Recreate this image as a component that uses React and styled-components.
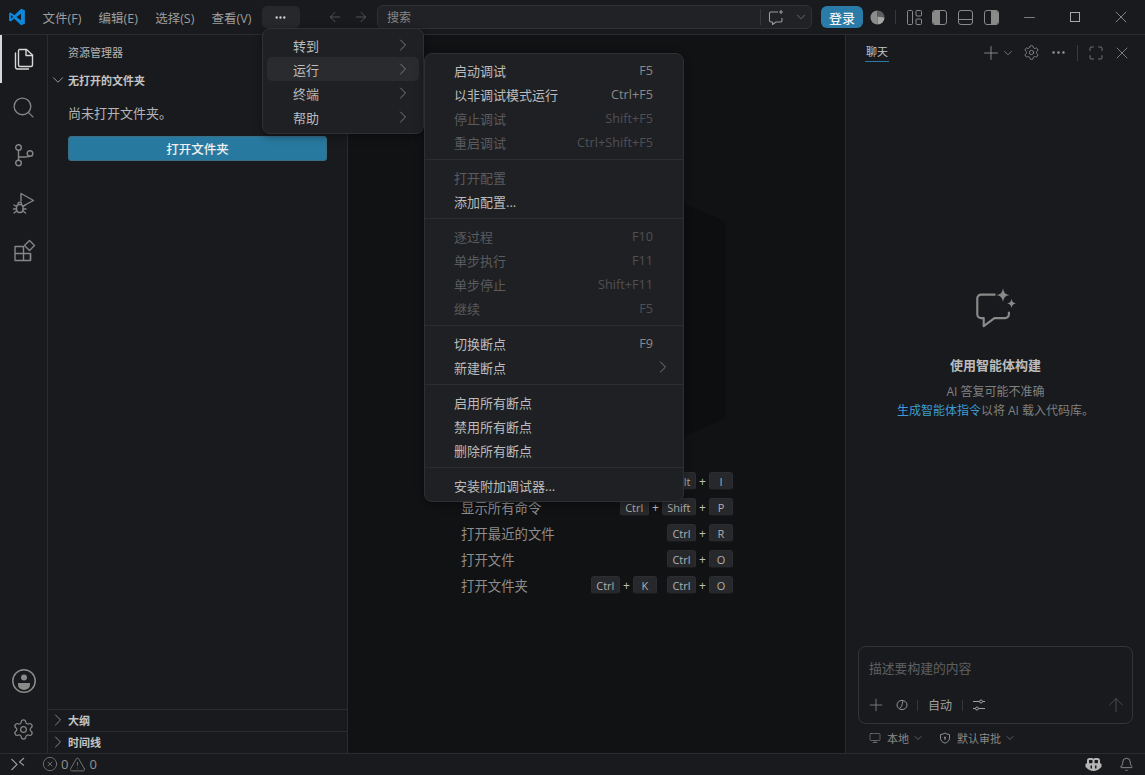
import React from 'react'
import styled, { createGlobalStyle } from 'styled-components'
import {
  ChevronDown,
  ChevronRight,
  ArrowLeft,
  ArrowRight,
  Search,
  Plus,
  Settings,
  Ellipsis,
  Maximize,
  X,
  Minus,
  ArrowUp,
  Monitor,
  Bell,
  CircleX,
  TriangleAlert,
} from 'lucide-react'

const GlobalStyle = createGlobalStyle`
  html, body { margin: 0; padding: 0; height: 100%; background: #181a1d; overflow: hidden; }
  #root { height: 100%; }
  * { box-sizing: border-box; }
`

const CJK = `"Open Sans", "Noto Sans CJK SC", sans-serif`

const runMenu = [
  [
    ['启动调试', 'F5'],
    ['以非调试模式运行', 'Ctrl+F5'],
    ['停止调试', 'Shift+F5', true],
    ['重启调试', 'Ctrl+Shift+F5', true],
  ],
  [
    ['打开配置', '', true],
    ['添加配置...', ''],
  ],
  [
    ['逐过程', 'F10', true],
    ['单步执行', 'F11', true],
    ['单步停止', 'Shift+F11', true],
    ['继续', 'F5', true],
  ],
  [
    ['切换断点', 'F9'],
    ['新建断点', '', false, true],
  ],
  [
    ['启用所有断点', ''],
    ['禁用所有断点', ''],
    ['删除所有断点', ''],
  ],
  [['安装附加调试器...', '']],
]

const shortcuts = [
  ['', [['Alt', 'I']]],
  ['显示所有命令', [['Ctrl', 'Shift', 'P']]],
  ['打开最近的文件', [['Ctrl', 'R']]],
  ['打开文件', [['Ctrl', 'O']]],
  ['打开文件夹', [['Ctrl', 'K'], ['Ctrl', 'O']]],
]

const VscodeLogo = ({ size = 18, color = '#0e88dc' }) => (
  <svg width={size} height={size} viewBox="0 0 24 24">
    <path fill={color} d="M17.5 1 8.4 9.6 3.6 6 1.5 7v10l2.1 1 4.8-3.6 9.1 8.6 5-2.1V3.1L17.5 1ZM4 14.6V9.4L6.7 12 4 14.6Zm13.3 1.6L11.2 12l6.1-4.2v8.4Z" />
  </svg>
)

const FilesIcon = () => (
  <svg width="24" height="24" viewBox="0 0 24 24" fill="none" stroke="#d7d7d7" strokeWidth="1.4" strokeLinejoin="round" strokeLinecap="round">
    <path d="M7 2.5h7.5L20.5 8v10a1.5 1.5 0 0 1-1.5 1.5H8A1.5 1.5 0 0 1 6.5 18V3.5" />
    <path d="M14 2.5V8.500h6.5" />
    <path d="M3.5 6v13.5A2 2 0 0 0 5.5 22H16.5" />
  </svg>
)

const BranchIcon = () => (
  <svg width="24" height="24" viewBox="0 0 24 24" fill="none" stroke="#868686" strokeWidth="1.4">
    <circle cx="6.5" cy="4.5" r="2.8" />
    <circle cx="6.5" cy="20" r="2.8" />
    <circle cx="18" cy="10.5" r="2.8" />
    <path d="M6.5 7.3v9.9M6.5 14H13c2.500 0 4.500-.6 5-.7" />
  </svg>
)

const RunDebugIcon = () => (
  <svg width="24" height="24" viewBox="0 0 24 24" fill="none" stroke="#868686" strokeWidth="1.4" strokeLinejoin="round" strokeLinecap="round">
    <path d="M9 10V2.5L21.5 9.5 12 14.5" />
    <rect x="4.5" y="13.5" width="6.5" height="8" rx="3" />
    <path d="M6 13c0-2.5 3.5-2.5 3.5 0M2 14l2.5 1.5M13.5 14 11 15.5M1.5 18h3M14 18h-3M2 22l2.5-2M13.5 22 11 20" />
  </svg>
)

const ExtensionsIcon = () => (
  <svg width="24" height="24" viewBox="0 0 24 24" fill="none" stroke="#868686" strokeWidth="1.4" strokeLinejoin="round">
    <path d="M3 7.5h8.5V21.5H3zM3 14.5h15.5V21.5H11.5" />
    <path d="M18.5 14.5V21.5" />
    <path d="m17.5 1.5 5 5-5 5-5-5z" />
  </svg>
)

const AccountIcon = () => (
  <svg width="26" height="26" viewBox="0 0 26 26" fill="none">
    <circle cx="13" cy="13" r="11.2" stroke="#8a8a8a" strokeWidth="1.5" />
    <circle cx="13" cy="9.5" r="3" fill="#8a8a8a" />
    <path fill="#8a8a8a" d="M7 15h12v2a6 5 0 0 1-12 0z" />
  </svg>
)

const ChatSparkle = () => (
  <svg width="45" height="43" viewBox="0 0 42 40" fill="none">
    <path stroke="#8a8a8a" strokeWidth="2" strokeLinejoin="round" d="M21 7H7.5A3.5 3.5 0 0 0 4 10.5v15A3.5 3.5 0 0 0 7.5 29H10v7.5L20 29h10a3.5 3.5 0 0 0 3.5-3.5V23" />
    <path fill="#8a8a8a" d="M28 1c1 4.5 2 5.5 6 6.5-4 1-5 2-6 6.5-1-4.5-2-5.5-6-6.5 4-1 5-2 6-6.5ZM36 11c.7 3 1.3 3.6 4 4.3-2.7.7-3.3 1.3-4 4.3-.7-3-1.3-3.6-4-4.3 2.7-.7 3.3-1.3 4-4.3Z" />
  </svg>
)

const App = () => (
  <>
    <GlobalStyle />
    <Window>
      <TitleBar>
        <LogoSlot>
          <VscodeLogo />
        </LogoSlot>
        <MenuBar>
          <MenuItem>文件(F)</MenuItem>
          <MenuItem>编辑(E)</MenuItem>
          <MenuItem>选择(S)</MenuItem>
          <MenuItem>查看(V)</MenuItem>
          <MoreButton>
            <Ellipsis size={13} strokeWidth={2.4} />
          </MoreButton>
        </MenuBar>
        <NavArrows>
          <ArrowLeft size={16} strokeWidth={1.2} />
          <ArrowRight size={16} strokeWidth={1.2} />
        </NavArrows>
        <SearchBox>
          <span>搜索</span>
          <SearchRight>
            <SearchDivider />
            <svg width="17" height="17" viewBox="0 0 17 17" fill="none" stroke="#9a9a9a" strokeWidth="1.1" strokeLinejoin="round">
              <path d="M10 3H3A1.5 1.5 0 0 0 1.5 4.5v7A1.5 1.5 0 0 0 3 13h1.5v2.5L8 13h4.5A1.5 1.5 0 0 0 14 11.5V9" />
              <path d="M13 1v4M11 3h4" />
            </svg>
            <SearchChevron size={14} color="#8a8a8a" strokeWidth={1.2} />
          </SearchRight>
        </SearchBox>
        <LoginButton>登录</LoginButton>
        <TitleIcons>
          <svg width="15" height="15" viewBox="0 0 16 16">
            <path fill="#8c8c8c" d="M8 .5a7.5 7.5 0 0 0 0 15z" />
            <path fill="#5e5e5e" d="M8 .5a7.5 7.5 0 0 1 7.5 7.5L8 7z" />
            <path fill="#a6a6a6" d="M8 7l7.5 1A7.5 7.5 0 0 1 8 15.5z" />
          </svg>
          <TitleDivider />
          <LayoutIcon viewBox="0 0 15 15" fill="none" stroke="#8a8a8a">
            <rect x=".5" y=".5" width="5" height="14" rx="1" />
            <rect x="9" y=".5" width="5.5" height="5.5" rx="1" />
            <rect x="9" y="9" width="5.5" height="5.5" rx="1" />
          </LayoutIcon>
          <PanelIcon kind="left" />
          <PanelIcon kind="bottom" />
          <PanelIcon kind="right" />
        </TitleIcons>
        <WindowControls>
          <WindowButton><Minus size={17} strokeWidth={1} /></WindowButton>
          <WindowButton>
            <svg width="10" height="10" viewBox="0 0 10 10" fill="none" stroke="#a8a8a8">
              <rect x=".5" y=".5" width="9" height="9" />
            </svg>
          </WindowButton>
          <WindowButton><X size={20} strokeWidth={0.9} /></WindowButton>
        </WindowControls>
      </TitleBar>

      <Body>
        <ActivityBar>
          <ActivityGroup>
            <ActivityItem $active><FilesIcon /></ActivityItem>
            <ActivityItem><Search size={25} strokeWidth={1.3} /></ActivityItem>
            <ActivityItem><BranchIcon /></ActivityItem>
            <ActivityItem><RunDebugIcon /></ActivityItem>
            <ActivityItem><ExtensionsIcon /></ActivityItem>
          </ActivityGroup>
          <ActivityGroup>
            <ActivityItem><AccountIcon /></ActivityItem>
            <ActivityItem><Settings size={23} strokeWidth={1.3} /></ActivityItem>
          </ActivityGroup>
        </ActivityBar>

        <SideBar>
          <SideTitle>资源管理器</SideTitle>
          <SectionHeader>
            <ChevronDown size={18} strokeWidth={1} />
            无打开的文件夹
          </SectionHeader>
          <SectionBody>
            <EmptyNote>尚未打开文件夹。</EmptyNote>
            <OpenButton>打开文件夹</OpenButton>
          </SectionBody>
          <SideFooter>
            <FooterRow>
              <ChevronRight size={20} strokeWidth={1} />
              大纲
            </FooterRow>
            <FooterRow>
              <ChevronRight size={20} strokeWidth={1} />
              时间线
            </FooterRow>
          </SideFooter>
        </SideBar>

        <Editor>
          <Watermark>
            <VscodeLogo size={266} color="#0d0e10" />
          </Watermark>
          <ShortcutList>
            {shortcuts.map(([label, chords]) => (
              <ShortcutRow key={label}>
                <span>{label}</span>
                <Chords>
                  {chords.map((keys, c) => (
                    <Chord key={c}>
                      {keys.map((k, i) => (
                        <React.Fragment key={k}>
                          {i > 0 && <Joiner>+</Joiner>}
                          <KeyCap>{k}</KeyCap>
                        </React.Fragment>
                      ))}
                    </Chord>
                  ))}
                </Chords>
              </ShortcutRow>
            ))}
          </ShortcutList>
        </Editor>

        <ChatPanel>
          <ChatHeader>
            <ChatTab>聊天</ChatTab>
            <ChatActions>
              <Plus size={22} strokeWidth={0.9} />
              <TightChevron size={14} strokeWidth={1.2} />
              <NudgedGear size={17} strokeWidth={1.1} />
              <Ellipsis size={17} strokeWidth={1.6} />
              <ChatDivider />
              <Maximize size={16} strokeWidth={1.1} />
              <NudgedClose size={20} strokeWidth={0.9} />
            </ChatActions>
          </ChatHeader>
          <ChatEmpty>
            <ChatSparkle />
            <ChatHeading>使用智能体构建</ChatHeading>
            <ChatHint>AI 答复可能不准确</ChatHint>
            <ChatHint><ChatLink>生成智能体指令</ChatLink>以将 AI 载入代码库。</ChatHint>
          </ChatEmpty>
          <InputCard>
            <Placeholder>描述要构建的内容</Placeholder>
            <InputTools>
              <Plus size={20} strokeWidth={0.9} />
              <ToolGlyph>
                <svg width="14" height="14" viewBox="0 0 14 14" fill="none" stroke="#929292">
                  <ellipse cx="7" cy="7" rx="5" ry="4.6" />
                  <path d="M7.8 3.2C7.5 6 6.5 9 4.8 10.6" />
                </svg>
              </ToolGlyph>
              <ToolDivider $left={8} />
              <ToolLabel>自动</ToolLabel>
              <ToolDivider $left={10} />
              <ToolSliders>
                <svg width="14" height="14" viewBox="0 0 14 14" fill="none" stroke="#a0a0a0">
                  <path d="M1 3.5h6.5M10.5 3.5H13M1 10.5h2.5M6.5 10.5H13" />
                  <circle cx="9" cy="3.5" r="1.5" />
                  <circle cx="5" cy="10.5" r="1.5" />
                </svg>
              </ToolSliders>
              <SendIcon><ArrowUp size={22} strokeWidth={0.9} /></SendIcon>
            </InputTools>
          </InputCard>
          <ChatOptions>
            <ChatOption>
              <Monitor size={12} strokeWidth={1.2} />
              本地
              <OptionChevron size={12} strokeWidth={1.2} />
            </ChatOption>
            <ChatOption>
              <svg width="12" height="12" viewBox="0 0 12 12" fill="none" stroke="#8a8a8a">
                <path d="M6 1c1.2.9 2.7 1.4 4.5 1.5v3.5c0 2.7-1.800 4.300-4.500 5.200C3.300 10.300 1.500 8.700 1.500 6V2.500C3.300 2.400 4.800 1.900 6 1Z" />
                <circle cx="6" cy="5.5" r="1" fill="#8a8a8a" stroke="none" />
                <path d="M6 6v2" />
              </svg>
              默认审批
              <OptionChevron size={12} strokeWidth={1.2} />
            </ChatOption>
          </ChatOptions>
        </ChatPanel>
      </Body>

      <StatusBar>
        <StatusLeft>
          <RemoteSlot>
            <svg width="16" height="16" viewBox="0 0 16 16" fill="none" stroke="#9a9a9a" strokeWidth="1.1">
              <path d="M1.5 3 7 8.5 1.5 14M14 2 9.5 6l4.5 3.5" />
            </svg>
          </RemoteSlot>
          <StatusItem><CircleX size={16} strokeWidth={1} />0</StatusItem>
          <StatusItem><TriangleAlert size={17} strokeWidth={1} />0</StatusItem>
        </StatusLeft>
        <StatusRight>
          <svg width="17" height="15" viewBox="0 0 17 15">
            <path fill="#b5b5b5" fillRule="evenodd" d="M4.5 1h2.3c.8 0 1.4.3 1.7 1 .3-.7.9-1 1.700-1h2.300C14.200 1 15 2 15 3.500V6l1.500 1v3l-1 .7C14 12.600 11.500 14 8.500 14s-5.500-1.400-7-3.300l-1-.7V7L2 6V3.500C2 2 2.800 1 4.500 1ZM4 3.500v2c0 .5.300.8.800.8h2c.5 0 .7-.3.700-.8v-2c0-.3-.2-.5-.5-.5H4.500c-.3 0-.5.200-.5.500Zm5.500 0v2c0 .5.200.8.700.8h2c.5 0 .8-.3.800-.8v-2c0-.3-.2-.5-.5-.5H10c-.3 0-.5.200-.5.500ZM5.500 8.500v3h1.500v-3Zm4.500 0v3h1.500v-3Z" />
          </svg>
          <Bell size={15} strokeWidth={1.1} />
        </StatusRight>
      </StatusBar>

      <OverflowMenu>
        {['转到', '运行', '终端', '帮助'].map((label) => (
          <OverflowItem key={label} $active={label === '运行'}>
            {label}
            <ChevronRight size={20} strokeWidth={1} />
          </OverflowItem>
        ))}
      </OverflowMenu>

      <RunMenu>
        {runMenu.map((group, g) => (
          <MenuGroup key={g} $first={g === 0}>
            {group.map(([label, key, disabled, sub]) => (
              <RunItem key={label} $disabled={disabled}>
                <span>{label}</span>
                <RunKey $disabled={disabled}>{key}</RunKey>
                {sub && <SubArrow><ChevronRight size={20} strokeWidth={1} /></SubArrow>}
              </RunItem>
            ))}
          </MenuGroup>
        ))}
      </RunMenu>
    </Window>
  </>
)

const Window = styled.div`
  position: relative;
  width: 1145px;
  height: 775px;
  display: flex;
  flex-direction: column;
  background: #181a1d;
  color: #bfbfbf;
  font-family: ${CJK};
  font-size: 13px;
  overflow: hidden;
`

const TitleBar = styled.div`
  height: 35px;
  flex: none;
  display: flex;
  align-items: center;
  border-bottom: 1px solid #2b2c2f;
`

const LogoSlot = styled.div`
  width: 34px;
  padding-left: 8px;
  display: flex;
`

const MenuBar = styled.div`
  display: flex;
  align-items: center;
  width: 266px;
`

const MenuItem = styled.div`
  padding: 0 8.6px;
  font-size: 12.5px;
  color: #9d9d9d;
  white-space: nowrap;
`

const MoreButton = styled.div`
  margin-left: 2px;
  width: 38px;
  height: 22px;
  border-radius: 5px;
  background: #26282b;
  color: #cfcfcf;
  display: flex;
  align-items: center;
  justify-content: center;
`

const NavArrows = styled.div`
  display: flex;
  gap: 10px;
  width: 77px;
  padding-left: 27px;
  color: #5f6064;
`

const SearchBox = styled.div`
  width: 435px;
  height: 24px;
  border: 1px solid #2f3033;
  border-radius: 6px;
  background: #212225;
  display: flex;
  align-items: center;
  justify-content: space-between;
  padding: 0 3px 0 9px;
  font-size: 12px;
  color: #858585;
`

const SearchRight = styled.div`
  display: flex;
  align-items: center;
  gap: 7px;
`

const SearchChevron = styled(ChevronDown)`
  margin-left: 2px;
`

const SearchDivider = styled.div`
  width: 1px;
  height: 16px;
  background: #36373a;
`

const LoginButton = styled.div`
  margin-left: 9px;
  width: 42px;
  height: 22px;
  border-radius: 6px;
  background: #2a7ba8;
  color: #f2f2f2;
  font-size: 13px;
  font-weight: 500;
  display: flex;
  align-items: center;
  justify-content: center;
`

const TitleIcons = styled.div`
  margin-left: 7px;
  display: flex;
  align-items: center;
  gap: 11px;
`

const TitleDivider = styled.div`
  width: 1px;
  height: 14px;
  background: #36373a;
  margin-left: -1px;
`

const LayoutIcon = styled.svg`
  width: 15px;
  height: 15px;
  margin-right: -1px;
`

const PanelShell = styled.div`
  width: 15px;
  height: 15px;
  border: 1px solid #8a8a8a;
  border-radius: 3px;
  overflow: hidden;
  display: flex;
  flex-direction: ${(p) => (p.$kind === 'bottom' ? 'column' : 'row')};
  justify-content: ${(p) => (p.$kind === 'left' ? 'flex-start' : 'flex-end')};
`

const PanelFill = styled.div`
  ${(p) =>
    p.$kind === 'bottom'
      ? 'height: 5px; border-top: 1px solid #8a8a8a;'
      : 'width: 7px; background: #8a8a8a;'}
`

const PanelIcon = ({ kind }) => (
  <PanelShell $kind={kind}>
    <PanelFill $kind={kind} />
  </PanelShell>
)

const WindowControls = styled.div`
  display: flex;
  margin-left: auto;
  padding-right: 1px;
`

const WindowButton = styled.div`
  width: 46px;
  height: 34px;
  display: flex;
  align-items: center;
  justify-content: center;
  color: #a8a8a8;
`

const Body = styled.div`
  flex: 1;
  min-height: 0;
  display: flex;
`

const ActivityBar = styled.div`
  width: 48px;
  flex: none;
  border-right: 1px solid #2b2c2f;
  display: flex;
  flex-direction: column;
  justify-content: space-between;
`

const ActivityGroup = styled.div`
  display: flex;
  flex-direction: column;
`

const ActivityItem = styled.div`
  height: 48px;
  display: flex;
  align-items: center;
  justify-content: center;
  color: #868686;
  ${(p) => p.$active && 'box-shadow: inset 2px 0 0 #d7d7d7;'}
`

const SideBar = styled.div`
  width: 300px;
  flex: none;
  border-right: 1px solid #2b2c2f;
  display: flex;
  flex-direction: column;
`

const SideTitle = styled.div`
  height: 34px;
  padding-left: 20px;
  display: flex;
  align-items: center;
  font-size: 11px;
  color: #b5b5b5;
`

const SectionHeader = styled.div`
  height: 22px;
  display: flex;
  align-items: center;
  gap: 1px;
  padding-left: 1px;
  font-size: 11px;
  font-weight: 700;
  color: #c4c4c4;
`

const SectionBody = styled.div`
  padding: 11px 20px 0;
`

const EmptyNote = styled.div`
  font-size: 13px;
  line-height: 22px;
  color: #b5b5b5;
`

const OpenButton = styled.div`
  margin-top: 12px;
  height: 25px;
  width: 259px;
  border-radius: 3px;
  border: 1px solid #3b6d85;
  background: #28799f;
  color: #f0f0f0;
  font-size: 12.5px;
  font-weight: 500;
  display: flex;
  align-items: center;
  justify-content: center;
`

const SideFooter = styled.div`
  margin-top: auto;
`

const FooterRow = styled.div`
  height: 22px;
  border-top: 1px solid #2b2c2f;
  display: flex;
  align-items: center;
  padding-bottom: 1px;
  font-size: 11px;
  font-weight: 700;
  color: #c4c4c4;
  svg { color: #9a9a9a; }
`

const Editor = styled.div`
  position: relative;
  flex: 1;
  background: #111214;
  display: flex;
  flex-direction: column;
  align-items: center;
  padding-top: 433px;
`

const Watermark = styled.div`
  position: absolute;
  left: 128px;
  top: 152px;
`

const ShortcutList = styled.div`
  position: relative;
  width: 272px;
  margin-left: 1px;
  display: flex;
  flex-direction: column;
`

const ShortcutRow = styled.div`
  height: 26px;
  display: flex;
  align-items: center;
  justify-content: space-between;
  color: #8d8d8d;
  font-size: 13.4px;
`

const Chords = styled.div`
  display: flex;
  gap: 10px;
`

const Chord = styled.div`
  display: flex;
  align-items: center;
`

const Joiner = styled.span`
  width: 13px;
  text-align: center;
  font-size: 12px;
  color: #bfbfbf;
`

const KeyCap = styled.span`
  min-width: 24px;
  height: 18px;
  padding: 0 4.5px;
  border-radius: 3px;
  background: #26282b;
  border: 1px solid #2b2d30;
  border-bottom-color: #1a1b1d;
  color: #b0b0b0;
  font-size: 11px;
  display: flex;
  align-items: center;
  justify-content: center;
`

const ChatPanel = styled.div`
  width: 300px;
  flex: none;
  border-left: 1px solid #2b2c2f;
  display: flex;
  flex-direction: column;
`

const ChatHeader = styled.div`
  height: 35px;
  flex: none;
  padding: 0 13px 0 19px;
  display: flex;
  align-items: center;
  justify-content: space-between;
`

const ChatTab = styled.div`
  font-size: 11px;
  color: #c4c4c4;
  height: 19px;
  line-height: 18px;
  padding: 0 1px;
  border-bottom: 1px solid #2a7ba8;
`

const ChatActions = styled.div`
  display: flex;
  align-items: center;
  gap: 10px;
  color: #999;
`

const TightChevron = styled(ChevronDown)`
  margin-left: -11px;
`

const NudgedGear = styled(Settings)`
  margin-left: -2px;
`

const NudgedClose = styled(X)`
  margin-left: -2px;
`

const ChatDivider = styled.div`
  width: 1px;
  height: 16px;
  background: #3a3b3e;
`

const ChatEmpty = styled.div`
  flex: 1;
  display: flex;
  flex-direction: column;
  align-items: center;
  padding-top: 217px;
`

const ChatHeading = styled.div`
  margin-top: 25px;
  margin-bottom: 8px;
  font-size: 13px;
  font-weight: 700;
  color: #bcbcbc;
`

const ChatHint = styled.div`
  font-size: 12px;
  line-height: 19px;
  color: #808080;
`

const ChatLink = styled.span`
  color: #3d9bd6;
`

const InputCard = styled.div`
  flex: none;
  margin: 0 12px;
  height: 78px;
  border: 1px solid #333437;
  border-radius: 8px;
  padding: 12px 5px 5px 7px;
  display: flex;
  flex-direction: column;
  justify-content: space-between;
`

const Placeholder = styled.div`
  padding-left: 3px;
  font-size: 12.8px;
  color: #5f6063;
  line-height: 18px;
`

const InputTools = styled.div`
  height: 26px;
  display: flex;
  align-items: center;
  color: #929292;
`

const ToolGlyph = styled.span`
  margin-left: 9px;
  display: flex;
`

const ToolLabel = styled.span`
  margin-left: 10px;
  font-size: 12px;
  color: #a0a0a0;
`

const ToolDivider = styled.div`
  margin-left: ${(p) => p.$left}px;
  width: 1px;
  height: 11px;
  background: #36373a;
`

const ToolSliders = styled.span`
  margin-left: 9px;
  display: flex;
`

const SendIcon = styled.div`
  margin-left: auto;
  display: flex;
  color: #555;
`

const ChatOptions = styled.div`
  flex: none;
  height: 29px;
  padding: 0 0 2px 23px;
  display: flex;
  align-items: center;
  gap: 15px;
`

const ChatOption = styled.div`
  display: flex;
  align-items: center;
  gap: 6px;
  font-size: 11px;
  color: #8a8a8a;
`

const OptionChevron = styled(ChevronDown)`
  margin-left: -3px;
`

const StatusBar = styled.div`
  height: 22px;
  flex: none;
  border-top: 1px solid #2b2c2f;
  display: flex;
  align-items: center;
  justify-content: space-between;
  padding-bottom: 1px;
  color: #929292;
  font-size: 13px;
`

const StatusLeft = styled.div`
  display: flex;
  align-items: center;
  gap: 1px;
`

const RemoteSlot = styled.div`
  width: 41px;
  padding-left: 10px;
  display: flex;
`

const StatusItem = styled.div`
  display: flex;
  align-items: center;
  gap: 3px;
`

const StatusRight = styled.div`
  display: flex;
  align-items: center;
  gap: 17px;
  padding-right: 11px;
  color: #b5b5b5;
`

const OverflowMenu = styled.div`
  position: absolute;
  left: 262px;
  top: 28px;
  width: 162px;
  height: 106px;
  padding: 4px;
  border: 1px solid #2f3033;
  border-radius: 8px;
  background: #1f2023;
  box-shadow: 0 2px 8px rgba(0, 0, 0, 0.4);
`

const OverflowItem = styled.div`
  height: 24px;
  padding: 0 6px 0 26px;
  display: flex;
  align-items: center;
  justify-content: space-between;
  border-radius: 5px;
  font-size: 13px;
  color: #bcbcbc;
  background: ${(p) => (p.$active ? '#2a2b2e' : 'transparent')};
  svg { color: #8a8a8a; }
`

const RunMenu = styled.div`
  position: absolute;
  left: 424px;
  top: 53px;
  width: 260px;
  height: 449px;
  padding: 4px 0;
  border: 1px solid #2f3033;
  border-radius: 8px;
  background: #1f2023;
  box-shadow: 0 2px 8px rgba(0, 0, 0, 0.4);
`

const MenuGroup = styled.div`
  ${(p) => !p.$first && 'border-top: 1px solid #2c2d30; margin-top: 5px; padding-top: 5px;'}
`

const RunItem = styled.div`
  position: relative;
  height: 24px;
  padding: 0 30px 0 29px;
  display: flex;
  align-items: center;
  justify-content: space-between;
  font-size: 13px;
  color: ${(p) => (p.$disabled ? '#5a5b5e' : '#bcbcbc')};
`

const RunKey = styled.span`
  font-size: 12.7px;
  color: ${(p) => (p.$disabled ? '#4f5053' : '#8a8a8a')};
`

const SubArrow = styled.span`
  position: absolute;
  right: 10px;
  top: 2px;
  color: #8a8a8a;
  display: flex;
`

export default App
